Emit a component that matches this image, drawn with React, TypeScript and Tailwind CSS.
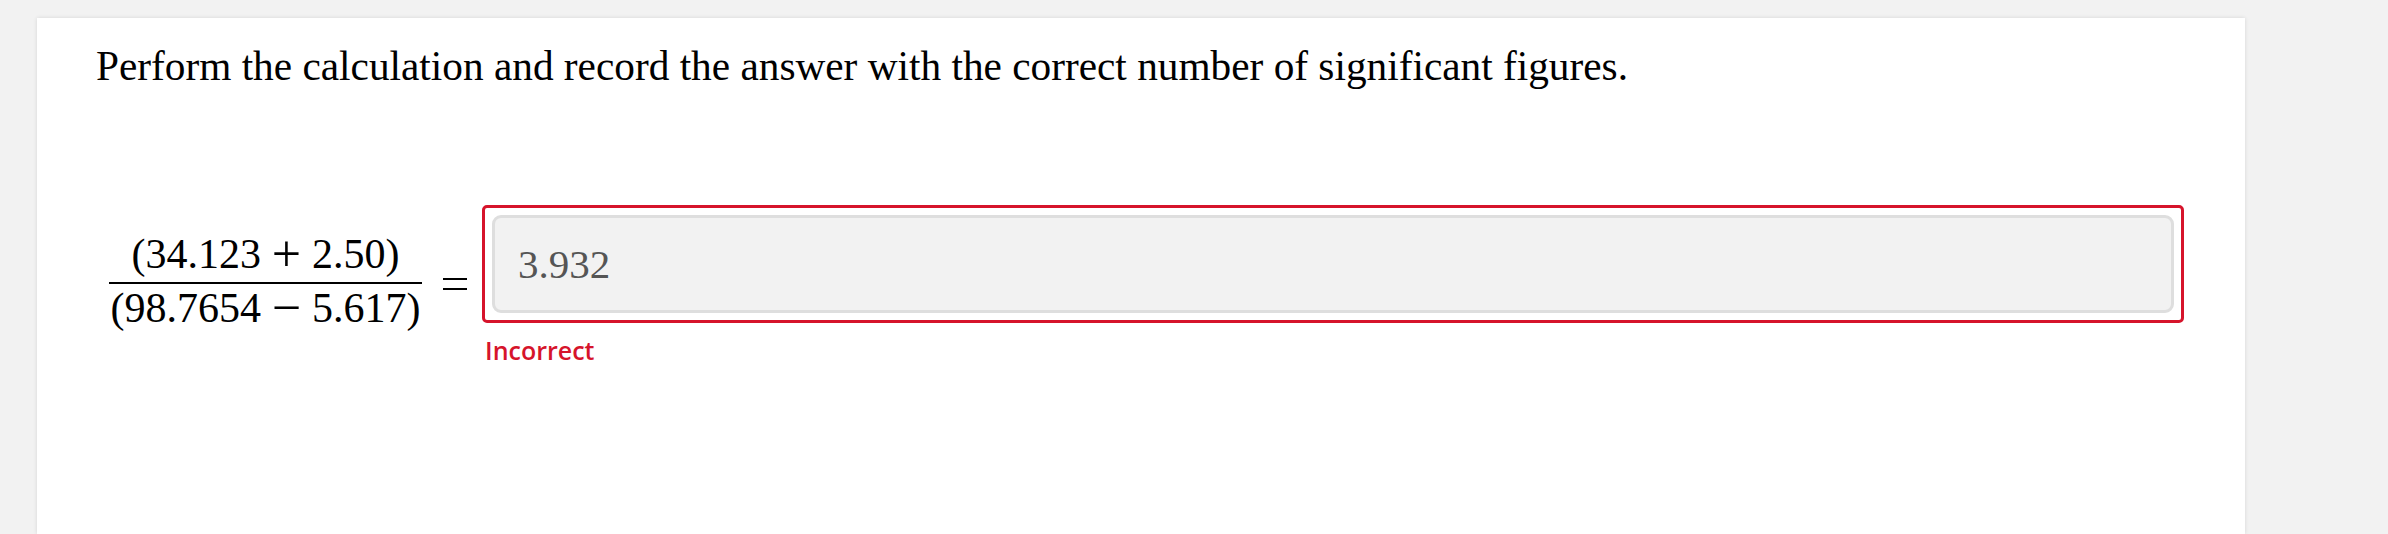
import React from "react";

export default function App() {
  const serif = { fontFamily: '"Liberation Serif", "Times New Roman", serif' };
  const op = (c: string) => (
    <span className="mx-[9px] inline-block w-[33px] translate-y-[3px] text-center text-[52px] leading-[30px]">{c}</span>
  );
  return (
    <div className="h-[534px] w-[2388px] overflow-hidden bg-[#f2f2f2]">
      <div className="ml-[37px] mt-[18px] h-[516px] w-[2208px] bg-white shadow-[0_0_4px_rgba(0,0,0,0.12)]">
        <div className="pl-[59px] pt-[18px]">
          <p
            className="text-[41.3px] leading-[60px] text-black"
            style={serif}
          >
            Perform the calculation and record the answer with the correct number of significant figures.
          </p>
          <div className="mt-[109px] flex items-start">
            <div
              className="ml-[13px] mt-[28px] flex flex-col items-center text-[42px] leading-none text-black"
              style={serif}
            >
              <div className="pb-[7px] whitespace-nowrap">(34.123{op("+")}2.50)</div>
              <div className="h-[2px] w-[313px] bg-black" />
              <div className="pt-[3px] whitespace-nowrap">(98.7654{op("−")}5.617)</div>
            </div>
            <div className="ml-[21px] mt-[73px] flex w-[24px] flex-col gap-[8px]">
              <div className="h-[2px] w-full bg-black" />
              <div className="h-[2px] w-full bg-black" />
            </div>
            <div className="ml-[15px] flex flex-col">
              <div className="h-[118px] w-[1702px] rounded-[5px] border-[3px] border-[#d6142b] p-[7px]">
                <div className="flex h-full w-full items-center rounded-[9px] border-[3px] border-[#dedede] bg-[#f2f2f2] pl-[23px]">
                  <span className="text-[41px] leading-none text-[#555555]" style={serif}>
                    3.932
                  </span>
                </div>
              </div>
              <div
                className="ml-[3px] mt-[15px] text-[25px] font-semibold leading-none text-[#d6142b]"
                style={{ fontFamily: '"Open Sans", "Noto Sans", sans-serif' }}
              >
                Incorrect
              </div>
            </div>
          </div>
        </div>
      </div>
    </div>
  );
}
